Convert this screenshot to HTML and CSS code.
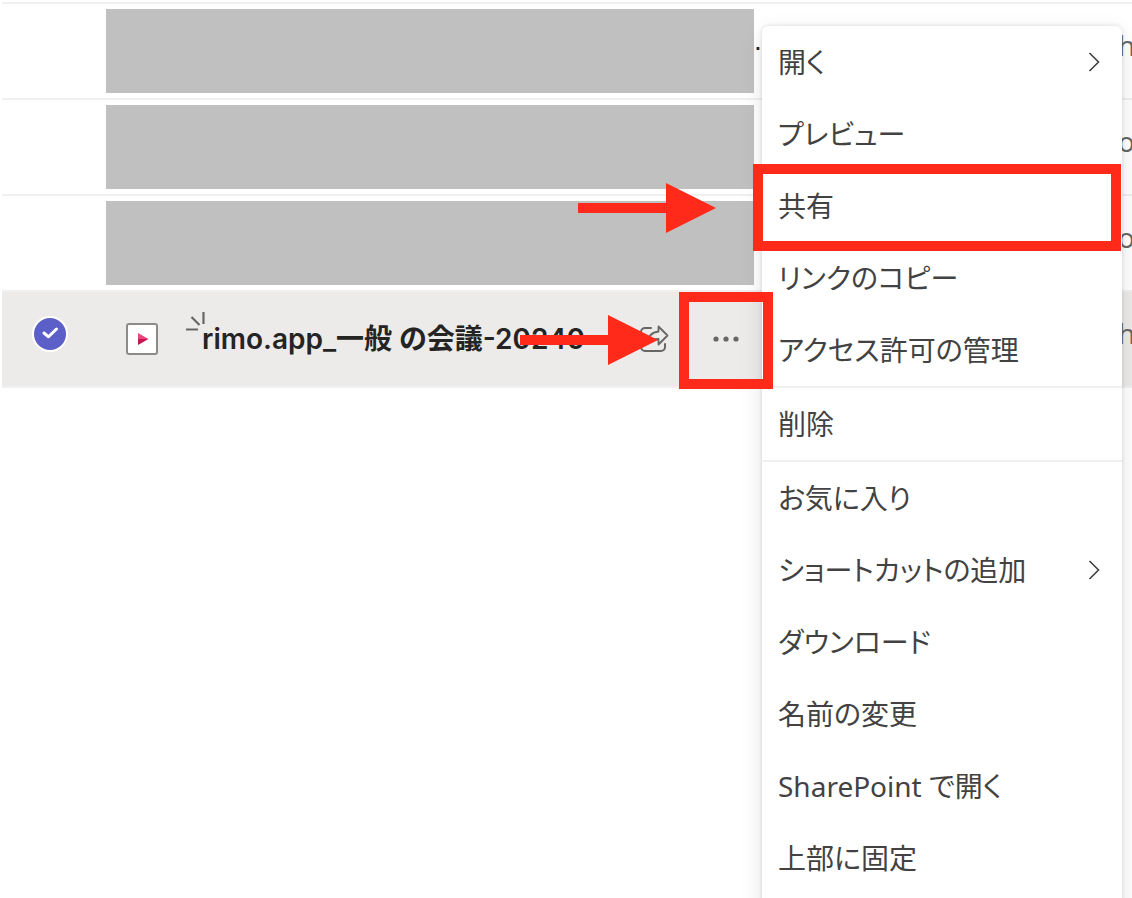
FILE: index.html
```html
<!DOCTYPE html>
<html lang="ja">
<head>
  <meta charset="UTF-8">
  <meta name="viewport" content="width=device-width, initial-scale=1.0">
  <title>ファイル</title>
  <link rel="stylesheet" href="styles.css">
</head>
<body>
  <main class="page">
    <ul class="file-list">
      <li class="row">
        <div class="name-cell"><span class="redacted"></span><span class="rest">.</span></div>
        <div class="author">h</div>
      </li>
      <li class="row">
        <div class="name-cell"><span class="redacted"></span></div>
        <div class="author">o</div>
      </li>
      <li class="row">
        <div class="name-cell"><span class="redacted"></span></div>
        <div class="author">o</div>
      </li>
      <li class="row selected">
        <label class="check">
          <input type="checkbox" checked aria-label="rimo.app_一般 の会議-20240">
          <svg viewBox="0 0 32 32" width="32" height="32" aria-hidden="true">
            <path d="M10 15l4.500 3.800L22.500 11" fill="none" stroke="#fff" stroke-width="3" stroke-linecap="round" stroke-linejoin="round"/>
          </svg>
        </label>
        <div class="name-cell file">
          <svg class="file-icon" viewBox="0 0 32 32" width="32" height="32" aria-hidden="true">
            <rect x="1" y="1" width="30" height="30" rx="2" fill="#fff" stroke="#8d8b89" stroke-width="2"/>
            <path d="M12 10l10.500 6H12z" fill="#e8467c"/>
            <path d="M12 16h10.500L12 22z" fill="#c2184f"/>
          </svg>
          <svg class="new-mark" viewBox="0 0 20 20" width="20" height="20" aria-hidden="true">
            <path d="M17.500 0v12M5.500 5l8 8M0 17.500h12" fill="none" stroke="#666" stroke-width="2.200"/>
          </svg>
          <a class="file-name" href="#">rimo.app_一般 の会議-20240</a>
          <div class="actions">
            <button type="button" aria-label="共有">
              <svg viewBox="0 0 30 28" width="30" height="28" aria-hidden="true">
                <path d="M12 3H6a4 4 0 0 0-4 4v15a4 4 0 0 0 4 4h16a4 4 0 0 0 4-4v-3" fill="none" stroke="#666" stroke-width="2" stroke-linecap="round"/>
                <path d="M19.500 1.500l9 9-9 9v-5.500c-5 0-8 1.500-11 5 .5-7 4-12 11-12.500z" fill="none" stroke="#666" stroke-width="1.800" stroke-linejoin="round"/>
              </svg>
            </button>
            <div class="more">
              <button type="button" aria-label="その他" aria-expanded="true">
                <svg viewBox="0 0 26 6" width="26" height="6" aria-hidden="true" fill="#666">
                  <circle cx="3" cy="3" r="2.600"/>
                  <circle cx="13" cy="3" r="2.600"/>
                  <circle cx="23" cy="3" r="2.600"/>
                </svg>
              </button>
              <span class="marker"></span>
              <svg class="arrow" viewBox="0 0 138 50" width="138" height="50" aria-hidden="true">
                <path d="M0 20h88V0l50 25-50 25V30H0z" fill="#ff2a19"/>
              </svg>
            </div>
          </div>
        </div>
        <div class="author">h</div>
      </li>
    </ul>

    <div class="menu" role="menu">
      <button class="item" type="button" role="menuitem">開く
        <svg viewBox="0 0 12 20" width="12" height="20" aria-hidden="true"><path d="M1.500 1l9 9-9 9" fill="none" stroke="#424242" stroke-width="1.600"/></svg>
      </button>
      <button class="item" type="button" role="menuitem">プレビュー</button>
      <button class="item" type="button" role="menuitem">共有
        <span class="marker"></span>
        <svg class="arrow" viewBox="0 0 138 50" width="138" height="50" aria-hidden="true">
          <path d="M0 20h88V0l50 25-50 25V30H0z" fill="#ff2a19"/>
        </svg>
      </button>
      <button class="item" type="button" role="menuitem">リンクのコピー</button>
      <button class="item" type="button" role="menuitem">アクセス許可の管理</button>
      <hr>
      <button class="item" type="button" role="menuitem">削除</button>
      <hr>
      <button class="item" type="button" role="menuitem">お気に入り</button>
      <button class="item" type="button" role="menuitem">ショートカットの追加
        <svg viewBox="0 0 12 20" width="12" height="20" aria-hidden="true"><path d="M1.500 1l9 9-9 9" fill="none" stroke="#424242" stroke-width="1.600"/></svg>
      </button>
      <button class="item" type="button" role="menuitem">ダウンロード</button>
      <button class="item" type="button" role="menuitem">名前の変更</button>
      <button class="item" type="button" role="menuitem">SharePoint で開く</button>
      <button class="item" type="button" role="menuitem">上部に固定</button>
    </div>
  </main>
</body>
</html>
```
FILE: styles.css
```css
* {
  box-sizing: border-box;
}

body {
  margin: 0;
  background: #fff;
  color: #424242;
  font-family: "Noto Sans", "Noto Sans CJK JP", sans-serif;
  font-size: 28px;
  line-height: 40px;
  font-feature-settings: "palt";
}

button {
  padding: 0;
  border: none;
  background: none;
  color: inherit;
  font: inherit;
  font-feature-settings: inherit;
  cursor: pointer;
}

.page {
  position: relative;
  min-height: 100vh;
  padding: 2px 0 0 2px;
  overflow: hidden;
}

/* File list */
.file-list {
  margin: 0;
  padding: 0;
  list-style: none;
}

.row {
  display: grid;
  grid-template-columns: 104px minmax(0, 1fr) 364px 14px;
  height: 96px;
  border-top: 2px solid #f0f0f0;
}

.name-cell {
  grid-column: 2;
  display: flex;
  align-items: center;
  min-width: 0;
}

.author {
  grid-column: 4;
  align-self: center;
  padding-bottom: 12px;
  color: #666;
}

.redacted {
  flex: 0 0 100%;
  height: 84px;
  background: #c0c0c0;
}

.rest {
  padding-bottom: 20px;
  color: #242424;
  font-family: "Liberation Sans", sans-serif;
}

.selected {
  height: 98px;
  border-bottom: 2px solid #f0f0f0;
  background: #ecebe9;
}

/* Round checkbox */
.check {
  display: grid;
  place-content: center;
  padding: 0 8px 10px 0;
}

.check input,
.check svg {
  grid-area: 1 / 1;
  margin: 0;
}

.check input {
  appearance: none;
  width: 32px;
  height: 32px;
  border-radius: 50%;
  background: #5b5fc7;
  box-shadow: 0 0 0 2px #fff;
}

.check svg {
  z-index: 1;
  pointer-events: none;
}

.file {
  padding-left: 20px;
}

.new-mark {
  align-self: flex-start;
  flex: none;
  margin: 20px -4px 0 28px;
}

.file-icon {
  flex: none;
}

.file-name {
  flex: 1;
  color: #242424;
  font-family: Inter, "Noto Sans CJK JP", sans-serif;
  font-weight: 600;
  white-space: nowrap;
  text-decoration: none;
}

.actions {
  display: flex;
  gap: 16px;
}

.actions button {
  display: grid;
  place-content: center;
  width: 56px;
  height: 56px;
}

.more {
  position: relative;
}

/* Context menu */
.menu {
  position: absolute;
  top: 26px;
  right: 10px;
  width: 360px;
  min-height: 100vh;
  border-radius: 6px;
  background: #fff;
  box-shadow: 0 0 4px rgba(0, 0, 0, 0.14), 0 8px 24px rgba(0, 0, 0, 0.1);
}

.item {
  position: relative;
  display: flex;
  align-items: center;
  justify-content: space-between;
  width: 100%;
  height: 72px;
  padding: 0 22px 0 16px;
  text-align: left;
  white-space: nowrap;
}

.menu hr {
  height: 2px;
  margin: 0;
  border: none;
  background: #f0f0f0;
}

/* Red frames and arrows */
.marker,
.arrow {
  position: absolute;
  z-index: 2;
  pointer-events: none;
}

.marker {
  border: 10px solid #ff2a19;
}

.item .marker {
  inset: -6px 1px -9px -9px;
}

.item .arrow {
  top: 13px;
  left: -184px;
}

.more .marker {
  inset: -19px -19px -22px;
}

.more .arrow {
  top: 4px;
  right: 96px;
}
```
